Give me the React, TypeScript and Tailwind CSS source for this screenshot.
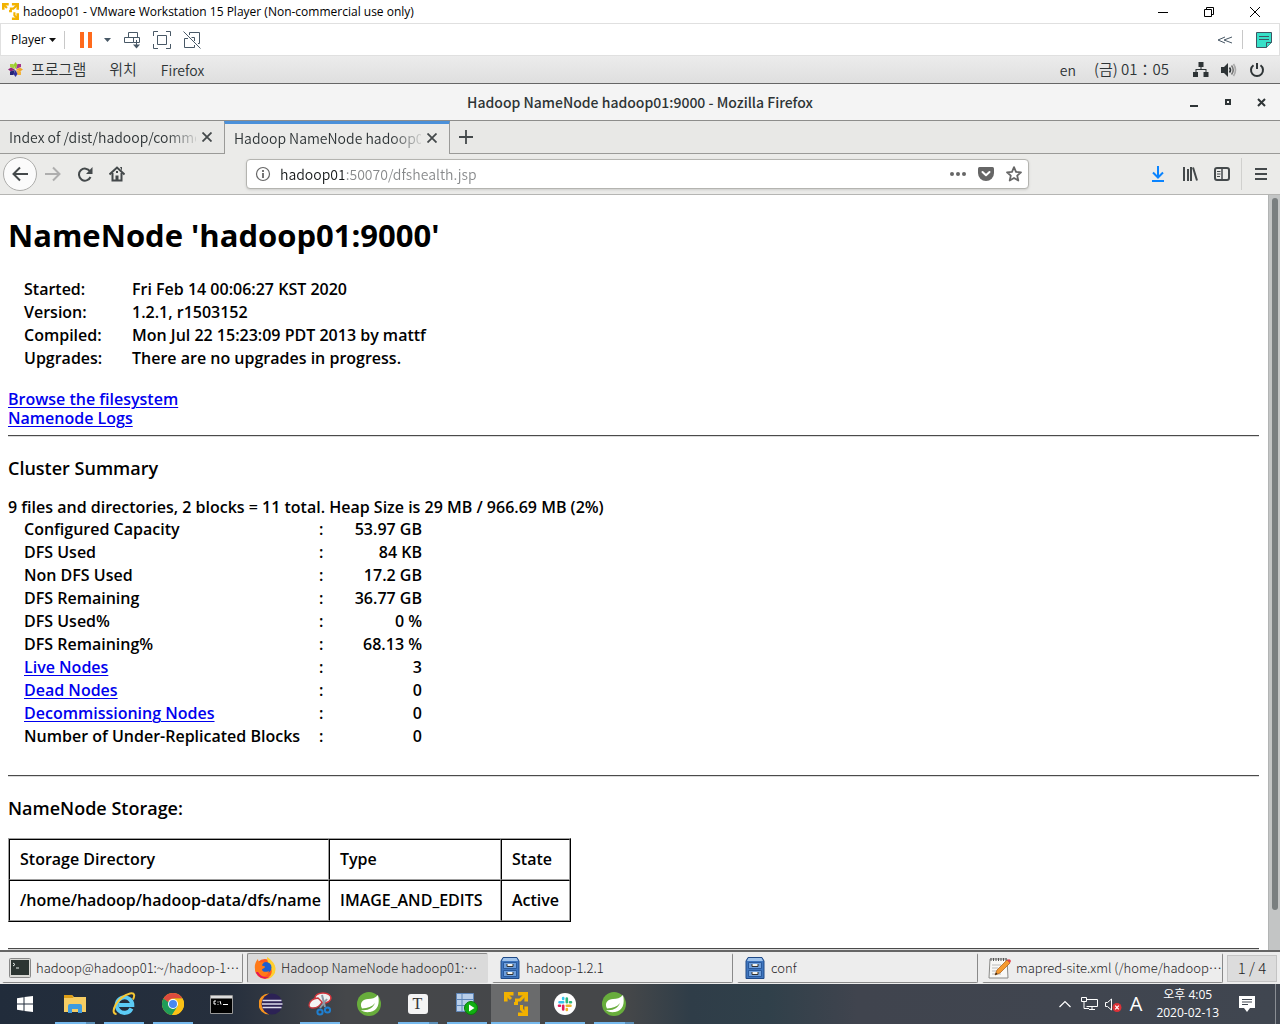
import React from "react";

type Row = { label: string; value: string; link?: boolean };

const startup: Row[] = [
  { label: "Started:", value: "Fri Feb 14 00:06:27 KST 2020" },
  { label: "Version:", value: "1.2.1, r1503152" },
  { label: "Compiled:", value: "Mon Jul 22 15:23:09 PDT 2013 by mattf" },
  { label: "Upgrades:", value: "There are no upgrades in progress." },
];

const summary: Row[] = [
  { label: "Configured Capacity", value: "53.97 GB" },
  { label: "DFS Used", value: "84 KB" },
  { label: "Non DFS Used", value: "17.2 GB" },
  { label: "DFS Remaining", value: "36.77 GB" },
  { label: "DFS Used%", value: "0 %" },
  { label: "DFS Remaining%", value: "68.13 %" },
  { label: "Live Nodes", value: "3", link: true },
  { label: "Dead Nodes", value: "0", link: true },
  { label: "Decommissioning Nodes", value: "0", link: true },
  { label: "Number of Under-Replicated Blocks", value: "0" },
];

function VmLogo({ size }: { size: number }) {
  return (
    <svg width={size} height={size} viewBox="0 0 24 24" fill="none" stroke="#f2b200" strokeWidth="3.600" aria-hidden="true">
      <path d="M1.800 9.500V1.800H9.500M14 1.800H22.200V9.500M22.200 14.500V22.200H14" />
      <path d="M2 2L7 7M22 2L16 8H12.500V11.500H10M22 22L17.500 17.500V13" strokeWidth="3" />
    </svg>
  );
}

function Caret({ color }: { color: string }) {
  return (
    <svg width="7" height="4" viewBox="0 0 7 4" aria-hidden="true">
      <path d="M0 0h7L3.5 4z" fill={color} />
    </svg>
  );
}

function HostTitleBar() {
  return (
    <header className="flex h-[23px] shrink-0 items-center bg-white pl-0.5 pr-px font-['Open_Sans','Noto_Sans_CJK_KR',sans-serif] text-xs text-black">
      <VmLogo size={17} />
      <h1 className="ml-1 flex-1">hadoop01 - VMware Workstation 15 Player (Non-commercial use only)</h1>
      <button aria-label="Minimize window" className="flex w-[46px] justify-center">
        <svg width="10" height="10" viewBox="0 0 10 10"><path d="M0 5.5h10" stroke="#000" /></svg>
      </button>
      <button aria-label="Restore window" className="flex w-[45px] justify-center">
        <svg width="10" height="10" viewBox="0 0 10 10" fill="none" stroke="#000"><path d="M.5 2.5h7v7h-7zM2.500 2.500v-2h7v7h-2" /></svg>
      </button>
      <button aria-label="Close window" className="flex w-12 justify-center">
        <svg width="10" height="10" viewBox="0 0 10 10" stroke="#000"><path d="M0 0l10 10M10 0L0 10" /></svg>
      </button>
    </header>
  );
}

function PlayerToolbar() {
  return (
    <div className="flex h-[33px] shrink-0 items-center border border-[#e0e0e0] bg-white pl-[10px] font-['Open_Sans',sans-serif] text-xs text-black">
      <button className="flex items-center gap-[3px]">
        Player <Caret color="#111" />
      </button>
      <span className="ml-2 h-[18px] w-px bg-[#c8c8c8]" />
      <button aria-label="Suspend" className="ml-[15px] flex gap-1">
        <span className="h-4 w-1 bg-[#ff6a1c]" />
        <span className="h-4 w-1 bg-[#ff6a1c]" />
      </button>
      <button aria-label="Power options" className="ml-3 flex"><Caret color="#485866" /></button>
      <button aria-label="Send Ctrl+Alt+Del" className="ml-[13px]">
        <svg width="17" height="18" viewBox="0 0 17 18" fill="none" stroke="#485866">
          <path d="M4.500 6.500v-5h9v5M.5 6.500h15v5h-6M.5 6.500v5h9v-5M12.500 9v6" />
          <path d="M9 13.500h7l-3.500 4z" fill="#485866" stroke="none" />
        </svg>
      </button>
      <button aria-label="Full screen" className="ml-3">
        <svg width="18" height="18" viewBox="0 0 18 18" fill="none" stroke="#485866">
          <path d="M.5 5V.5H5M13 .5h4.500V5M17.500 13v4.500H13M5 17.500H.5V13M4.500 4.500h9v9h-9z" />
        </svg>
      </button>
      <button aria-label="Unity mode" className="ml-3">
        <svg width="18" height="18" viewBox="0 0 18 18" fill="none" stroke="#485866">
          <path d="M6.500 4V1.500h10v11H15M1.500 7.500v9h10v-2.500M1.500 7.500H5M11.500 10V6.500H8.500M.5.5l17 17" />
        </svg>
      </button>
      <span className="flex-1" />
      <button aria-label="Collapse toolbar" className="mr-[9px]">
        <svg width="16" height="10" viewBox="0 0 16 10" fill="none" stroke="#485866"><path d="M8 2L1 5L8 8M15 2L7 5L15 8" /></svg>
      </button>
      <span className="h-[19px] w-px bg-[#c8c8c8]" />
      <button aria-label="Notes" className="ml-[13px] mr-[7px]">
        <svg width="16" height="16" viewBox="0 0 16 16" fill="#36e0c8" stroke="#3d5663">
          <path d="M.5.500h15v10l-5 5H.5z" />
          <path d="M15.500 10.500h-5v5M3 4.500h10M3 7.500h10" />
        </svg>
      </button>
    </div>
  );
}

function GnomeTopBar() {
  return (
    <nav className="flex h-7 shrink-0 items-center border-b border-[#666] bg-linear-to-b from-[#ececec] to-[#dfdfdf] pl-2 pr-[15px] text-[15px] font-[350] text-[#2e3436]">
      <svg width="15" height="15" viewBox="0 0 15 15" aria-hidden="true">
        <path d="M7.500 0l2 3-2 4-2-4z" fill="#9ccd2a" />
        <path d="M2 2h3.500l1.500 5L2 5z" fill="#a6d13c" />
        <path d="M9.500 2H13v3L8 7z" fill="#a3358c" />
        <path d="M0 7.500l3-2 4 2-4 2z" fill="#932279" />
        <path d="M15 7.500l-3-2-4 2 4 2z" fill="#f0a62b" />
        <path d="M2 13V9.500L7 8l-1.500 5z" fill="#262577" />
        <path d="M13 13V9.500L8 8l1.500 5z" fill="#f2b33d" />
        <path d="M7.500 15l2-3-2-4-2 4z" fill="#33309b" />
      </svg>
      <button className="ml-2">프로그램</button>
      <button className="ml-[23px]">위치</button>
      <button className="ml-6 text-sm">Firefox</button>
      <span className="flex-1" />
      <button className="text-sm">en</button>
      <time className="ml-[18px]">(금) 01：05</time>
      <svg className="ml-6" width="16" height="15" viewBox="0 0 16 15" fill="#2e3436" aria-label="Network">
        <path d="M5.500 0h5v5H8.500v2h5v3H15.500v5h-5v-5h2V8h-9v2H5v5H0v-5h2.500V7h5V5h-2z" />
      </svg>
      <svg className="ml-3" width="16" height="14" viewBox="0 0 16 14" fill="none" aria-label="Volume">
        <path d="M0 4h3l4-4v14l-4-4H0z" fill="#2e3436" />
        <path d="M8.500 4.500q2 2.500 0 5" stroke="#2e3436" strokeWidth="1.600" />
        <path d="M10.500 2.500q3.500 4.500 0 9" stroke="#777" strokeWidth="1.600" />
        <path d="M12.500 1q4 6 0 12" stroke="#aaa" strokeWidth="1.600" />
      </svg>
      <svg className="ml-3" width="16" height="16" viewBox="0 0 16 16" fill="none" stroke="#2e3436" strokeWidth="2" aria-label="Power">
        <path d="M4.500 3.200a6 6 0 1 0 7 0M8 1v6" />
      </svg>
    </nav>
  );
}

function WindowTitle() {
  return (
    <div className="grid h-[37px] shrink-0 grid-cols-[1fr_auto_1fr] items-center border-b border-[#8d8d8b] bg-[#f4f4f4]">
      <span />
      <h2 className="text-sm font-medium text-[#2e3436]">Hadoop NameNode hadoop01:9000 - Mozilla Firefox</h2>
      <div className="flex items-center justify-end gap-[25px] pr-3.5">
        <button aria-label="Minimize">
          <svg width="9" height="9" viewBox="0 0 9 9"><path d="M0 7h8v2H0z" fill="#2e3436" /></svg>
        </button>
        <button aria-label="Maximize">
          <svg width="8" height="8" viewBox="0 0 8 8"><path d="M2 2h4v4H2z" fill="none" stroke="#2e3436" strokeWidth="2" /></svg>
        </button>
        <button aria-label="Close">
          <svg width="9" height="9" viewBox="0 0 9 9"><path d="M1 1l7 7M8 1L1 8" stroke="#2e3436" strokeWidth="2" /></svg>
        </button>
      </div>
    </div>
  );
}

function Tab({ title, active }: { title: string; active?: boolean }) {
  return (
    <div
      className={
        active
          ? "flex w-[226px] items-center border-x border-t-[3px] border-x-[#9a9a98] border-t-[#4a90d9] bg-[#ebebe9] pb-[3px] pl-[9px] pr-3"
          : "flex w-[224px] items-center border-b border-[#9a9a98] pl-[9px] pr-3"
      }
    >
      <button className="min-w-0 flex-1 overflow-hidden whitespace-nowrap text-left [mask-image:linear-gradient(90deg,#000_84%,#0002)]">
        {title}
      </button>
      <button aria-label="Close tab" className="ml-1.5">
        <svg width="10" height="10" viewBox="0 0 10 10"><path d="M.5.5l9 9M9.500.5l-9 9" stroke="#44494b" strokeWidth="1.800" /></svg>
      </button>
    </div>
  );
}

function TabStrip() {
  return (
    <div className="flex h-[33px] shrink-0 bg-[#e8e8e6] text-sm font-[350] text-[#2e3436]">
      <Tab title="Index of /dist/hadoop/commo" />
      <Tab title="Hadoop NameNode hadoop0" active />
      <div className="flex flex-1 items-center border-b border-[#9a9a98] pl-[9px]">
        <button aria-label="New tab">
          <svg width="14" height="14" viewBox="0 0 14 14"><path d="M7 0v14M0 7h14" stroke="#44494b" strokeWidth="1.800" /></svg>
        </button>
      </div>
    </div>
  );
}

function ToolButton({ label, children }: { label: string; children: React.ReactNode }) {
  return (
    <button aria-label={label} className="flex h-8 w-8 shrink-0 items-center justify-center">
      <svg width="16" height="16" viewBox="0 0 16 16" fill="none" stroke="#44494b" strokeWidth="2">
        {children}
      </svg>
    </button>
  );
}

function NavBar() {
  return (
    <div className="flex h-[41px] shrink-0 items-center border-b border-[#b5b5b3] bg-[#ebebe9] pl-[3px] pr-[3px]">
      <button aria-label="Back" className="flex h-[34px] w-[34px] shrink-0 items-center justify-center rounded-full border border-[#acacaa] bg-[#fbfbfb]">
        <svg width="16" height="16" viewBox="0 0 16 16" fill="none" stroke="#44494b" strokeWidth="2"><path d="M16 8H1.500M8 1.500L1.500 8L8 14.500" /></svg>
      </button>
      <ToolButton label="Forward"><path d="M0 8h14.500M8 1.500L14.500 8L8 14.500" stroke="#aeaeae" /></ToolButton>
      <ToolButton label="Reload">
        <path d="M13 5.300A6 6 0 1 0 13.500 11" />
        <path d="M15.500 1v7H9z" fill="#44494b" stroke="none" />
      </ToolButton>
      <ToolButton label="Home">
        <path d="M.5 8.500L8 1.500l7.500 7" />
        <path d="M3.500 7v7.500h9V7" />
        <path d="M6.500 15V9.500h3V15zM11 1h2v4z" fill="#44494b" stroke="none" />
        <path d="M8 5v2" />
      </ToolButton>
      <div className="mx-[113px] flex h-[30px] min-w-0 flex-1 items-center rounded-[4px] border border-[#b4b4b0] bg-white pl-2 pr-1.5 shadow-sm">
        <svg width="16" height="16" viewBox="0 0 16 16" fill="none" stroke="#666" aria-hidden="true">
          <circle cx="8" cy="8" r="6.500" strokeWidth="1.200" />
          <path d="M8 7v5M8 4v2" strokeWidth="1.800" />
        </svg>
        <input
          aria-label="Address"
          defaultValue="hadoop01:50070/dfshealth.jsp"
          className="ml-[9px] min-w-0 flex-1 bg-[linear-gradient(90deg,#16191a_64px,#858789_64px)] bg-clip-text text-sm font-[350] text-transparent outline-none"
        />
        <button aria-label="Page actions" className="mr-3">
          <svg width="16" height="4" viewBox="0 0 16 4" fill="#666"><circle cx="2" cy="2" r="2" /><circle cx="8" cy="2" r="2" /><circle cx="14" cy="2" r="2" /></svg>
        </button>
        <button aria-label="Save to Pocket" className="mr-3">
          <svg width="16" height="14" viewBox="0 0 16 14">
            <path d="M1.500 0h13Q16 0 16 1.500V6A8 8 0 0 1 0 6V1.500Q0 0 1.500 0z" fill="#666" />
            <path d="M4.500 5L8 8.300L11.500 5" fill="none" stroke="#fff" strokeWidth="2" strokeLinecap="round" strokeLinejoin="round" />
          </svg>
        </button>
        <button aria-label="Bookmark">
          <svg width="16" height="16" viewBox="0 0 16 16" fill="none" stroke="#666" strokeWidth="1.800" strokeLinejoin="round">
            <path d="M8 1.200l2 4.600 5 .5-3.800 3.300 1.100 4.900L8 12l-4.300 2.500 1.100-4.900L1 6.300l5-.5z" />
          </svg>
        </button>
      </div>
      <ToolButton label="Downloads"><path d="M8 0v11M3 6.500l5 5 5-5M2 15h12" stroke="#0a84ff" /></ToolButton>
      <ToolButton label="Library"><path d="M2 1v14M6 3v12M9 1v14M11 1.500l4 13" strokeWidth="2" /></ToolButton>
      <ToolButton label="Sidebars">
        <rect x="1" y="2" width="14" height="12" rx="2" />
        <path d="M8 2v12" strokeWidth="1.500" />
        <path d="M3 5.500h3.500M3 8h3.500M3 10.500h3" strokeWidth="1" />
      </ToolButton>
      <span className="ml-[3px] mr-[3px] h-8 w-px bg-[#d0d0ce]" />
      <ToolButton label="Menu"><path d="M2 3h12M2 8h12M2 13h12" /></ToolButton>
    </div>
  );
}

function Rule() {
  return <hr className="mr-[9px] h-0.5 border-t border-b border-t-[#4a4a4a] border-b-[#dcdcdc]" />;
}

function Link({ children }: { children: React.ReactNode }) {
  return (
    <a href="#" className="block w-fit text-[#0000ee] underline decoration-1 underline-offset-2">
      {children}
    </a>
  );
}

function Page() {
  const head = "border border-t-black border-l-black border-r-[#a0a0a0] border-b-[#a0a0a0] py-[10px] pr-[7px] pl-[10px] text-left font-semibold whitespace-nowrap";
  return (
    <main className="min-w-0 flex-1 overflow-hidden bg-white pl-2 pt-[21px] font-['Open_Sans',sans-serif] text-base leading-[19px] font-semibold text-black">
      <h1 className="text-[31px] leading-[38px] font-bold">NameNode 'hadoop01:9000'</h1>
      <table className="mt-6 ml-4">
        <tbody>
          {startup.map((r) => (
            <tr key={r.label} className="h-[23px]">
              <td className="w-[108px]">{r.label}</td>
              <td>{r.value}</td>
            </tr>
          ))}
        </tbody>
      </table>
      <div className="mt-5 mb-[7px]">
        <Link>Browse the filesystem</Link>
        <Link>Namenode Logs</Link>
      </div>
      <Rule />
      <h3 className="mt-5 text-lg leading-[22px]">Cluster Summary</h3>
      <p className="mt-[19px] mb-px">9 files and directories, 2 blocks = 11 total. Heap Size is 29 MB / 966.69 MB (2%)</p>
      <table className="ml-4">
        <tbody>
          {summary.map((r) => (
            <tr key={r.label} className="h-[23px]">
              <td className="w-[295px]">{r.link ? <Link>{r.label}</Link> : r.label}</td>
              <td className="w-[22px]">:</td>
              <td className="w-[81px] text-right">{r.value}</td>
            </tr>
          ))}
        </tbody>
      </table>
      <div className="mt-[27px]"><Rule /></div>
      <h3 className="mt-5 text-lg leading-[22px]">NameNode Storage:</h3>
      <table className="mt-[19px] border-separate border-spacing-0 border border-t-[#a0a0a0] border-l-[#a0a0a0] border-r-black border-b-black">
        <thead>
          <tr>
            <th className={head + " w-[320px]"}>Storage Directory</th>
            <th className={head + " w-[172px]"}>Type</th>
            <th className={head + " w-[69px]"}>State</th>
          </tr>
        </thead>
        <tbody>
          <tr>
            <td className={head}>/home/hadoop/hadoop-data/dfs/name</td>
            <td className={head}>IMAGE_AND_EDITS</td>
            <td className={head}>Active</td>
          </tr>
        </tbody>
      </table>
      <div className="mt-[26px]"><Rule /></div>
    </main>
  );
}

function FirefoxLogo() {
  return (
    <svg width="22" height="22" viewBox="0 0 22 22" aria-hidden="true">
      <circle cx="11" cy="12" r="10" fill="#ff5a1f" />
      <path d="M13 0c3 2 8 6 8.500 11a10 10 0 0 1-10 11C17 20 19 16 17 11c-1-3-4-5-4-11z" fill="#ffcf2e" />
      <circle cx="12" cy="10.500" r="5.500" fill="#1c5fd0" />
      <path d="M1 12C0 7 3 3 4 2c0 2 1 3 2 3.500 1-.5 3-.5 4 0-1 1-2 2-2 3l3 1c0 2-3 2-3 3.500 1 2 4 2.500 7 1-1 4-4 6-8 5.500C4 19 1.500 16 1 12z" fill="#ff7a18" />
      <path d="M2 15c2 6 9 8 14 5-4 1-9 0-12-5z" fill="#e4165c" />
    </svg>
  );
}

function TerminalLogo() {
  return (
    <svg width="22" height="20" viewBox="0 0 22 20" aria-hidden="true">
      <rect x=".5" y=".5" width="21" height="19" rx="1" fill="#d8d8d4" stroke="#888" />
      <rect x="2" y="2" width="18" height="15" fill="#2c3532" />
      <path d="M4 5l2 1.500L4 8M7 10h3" stroke="#e8eeea" fill="none" />
    </svg>
  );
}

function CabinetLogo() {
  return (
    <svg width="22" height="22" viewBox="0 0 22 22" aria-hidden="true">
      <path d="M4 .5h14l2 3.500v17.500H2V4z" fill="#3f76bf" stroke="#204a87" />
      <path d="M4.500 1h13l1.500 3H3z" fill="#9fc3ec" />
      <path d="M4.500 5.500h13v6h-13zM4.500 13.500h13v6h-13z" fill="#6f9fdb" stroke="#2a5a9d" />
      <path d="M8 7v2.500h6V7M8 15v2.500h6V15" fill="#f4f4ee" stroke="#333" />
    </svg>
  );
}

function EditorLogo() {
  return (
    <svg width="24" height="22" viewBox="0 0 24 22" aria-hidden="true">
      <path d="M2 2h17l1 19H1z" fill="#f8f8f6" stroke="#8a8a88" />
      <path d="M3 1v3M5.500 1v3M8 1v3M10.500 1v3M13 1v3M15.500 1v3M18 1v3" stroke="#555" />
      <path d="M4 8h9M4 11h6M4 14h5M4 17h9" stroke="#bbb" />
      <path d="M7 18l2-5L19 3l3 3-10 10z" fill="#f59a2f" stroke="#a85a12" strokeWidth=".7" />
      <path d="M19 3q3-2 4 1l-1 2z" fill="#e0434b" />
      <path d="M7 18l1-2.500 1.500 1.500z" fill="#222" />
    </svg>
  );
}

const tasks = [
  { icon: <TerminalLogo />, title: "hadoop@hadoop01:~/hadoop-1…" },
  { icon: <FirefoxLogo />, title: "Hadoop NameNode hadoop01:…", active: true },
  { icon: <CabinetLogo />, title: "hadoop-1.2.1" },
  { icon: <CabinetLogo />, title: "conf" },
  { icon: <EditorLogo />, title: "mapred-site.xml (/home/hadoop…" },
];

function GnomeTaskBar() {
  return (
    <nav className="flex h-[34px] shrink-0 items-center gap-1 border-t-2 border-[#666] bg-[#ededed] px-0.5 font-['Noto_Sans_CJK_JP',sans-serif] text-[13px] text-[#1f2426]">
      {tasks.map((t) => (
        <button
          key={t.title}
          lang="ja"
          className={
            t.active
              ? "flex h-[30px] min-w-0 flex-1 items-center gap-1 whitespace-nowrap rounded-[2px] border border-t-[#8a8a8a] border-r-[#dadada] border-b-[#dadada] border-l-[#8a8a8a] bg-[#dadada] pl-[5px] font-light"
              : "flex h-[30px] min-w-0 flex-1 items-center gap-1 whitespace-nowrap rounded-[2px] border border-t-[#ededed] border-r-[#8a8a8a] border-b-[#8a8a8a] border-l-[#ededed] bg-[#ededed] pl-[5px] font-light"
          }
        >
          <span className="flex w-6 shrink-0 justify-center">{t.icon}</span>
          {t.title}
        </button>
      ))}
      <button className="mr-px h-[27px] w-[50px] shrink-0 border border-[#c4c4c4] bg-[#dcdcdc] text-[15px] font-light">1 / 4</button>
    </nav>
  );
}

function SpringLogo() {
  return (
    <svg width="24" height="24" viewBox="0 0 24 24">
      <circle cx="12" cy="12" r="12" fill="#68ad3c" />
      <path d="M21 3c2 8 0 16-8 17-4 .5-8-.5-9-2 7 1 12-2 14-7-3 4-7 5-13 5.500C2 11 6 7 11 7c4 0 7-1 10-4z" fill="#fff" />
    </svg>
  );
}

const apps: { name: string; icon: React.ReactNode; open?: boolean; stacked?: boolean; active?: boolean }[] = [
  {
    name: "File Explorer",
    open: true,
    stacked: true,
    icon: (
      <svg width="22" height="20" viewBox="0 0 22 20">
        <path d="M0 1h8l2 2h12v15H0z" fill="#f6cd63" />
        <path d="M0 1h8l1.500 3H0z" fill="#dd9d16" />
        <path d="M4 19v-7q0-2 2-2h10q2 0 2 2v7h-4v-4H8v4z" fill="#3d9be0" />
      </svg>
    ),
  },
  {
    name: "Internet Explorer",
    open: true,
    icon: (
      <svg width="24" height="24" viewBox="0 0 24 24" fill="none">
        <path d="M19.500 16.500A7.800 7.800 0 1 1 20.300 13H7" stroke="#5bcbf5" strokeWidth="4" />
        <path d="M4.500 22C-3 22 5 5 18 1.500c5.500-1 4.500 3 3 6" stroke="#f7c733" strokeWidth="2" />
      </svg>
    ),
  },
  {
    name: "Chrome",
    open: true,
    icon: (
      <svg width="22" height="22" viewBox="0 0 22 22">
        <circle cx="11" cy="11" r="11" fill="#fbc116" />
        <path d="M20.530 5.500H11v5.500L1.470 5.500A11 11 0 0 0 10 22l5.500-8.500z" fill="#1f9d58" />
        <path d="M20.530 5.500H11A5.500 5.500 0 0 0 6 9L1.470 5.500A11 11 0 0 1 20.530 5.500z" fill="#dd4b3e" />
        <path d="M20.530 5.500H11l5 7.500L10 22A11 11 0 0 0 20.530 5.500z" fill="#fbc116" />
        <circle cx="11" cy="11" r="5" fill="#fff" />
        <circle cx="11" cy="11" r="4" fill="#4688f1" />
      </svg>
    ),
  },
  {
    name: "Command Prompt",
    icon: (
      <svg width="23" height="19" viewBox="0 0 23 19">
        <path d="M.5.5h22v18H.5z" fill="#000" stroke="#999" />
        <path d="M1 1h21v2.500H1z" fill="#ddd" />
        <path d="M6 6H4v3h2M8 6.500v1M8 9v.8M10 6l1 3.500M13 9.500h5" stroke="#fff" fill="none" />
      </svg>
    ),
  },
  {
    name: "Eclipse",
    icon: (
      <svg width="24" height="22" viewBox="0 0 24 22">
        <path d="M10 .5A10.500 10.500 0 0 0 10 21.500A14 14 0 0 1 10 .5z" fill="#f7941e" />
        <circle cx="13" cy="11" r="10.500" fill="#2c2255" />
        <path d="M3.500 7.500h19M3 11h20.500M3.500 14.500h19" stroke="#dcdcec" strokeWidth="1.600" />
      </svg>
    ),
  },
  {
    name: "Snipping Tool",
    open: true,
    icon: (
      <svg width="24" height="24" viewBox="0 0 24 24" fill="none">
        <ellipse cx="15" cy="6" rx="8" ry="5" fill="#eee" stroke="#d6343b" strokeWidth="1.500" />
        <path d="M1 13q1-6 9-7l4 4q-3 6-9 6-4 0-4-3z" fill="#f4f4f4" stroke="#c8373d" strokeWidth="1.300" />
        <path d="M14 3l3 12M19 7l-7 9" stroke="#8d99a5" strokeWidth="2" />
        <circle cx="12" cy="20" r="2.600" stroke="#1f7fd0" strokeWidth="2" />
        <circle cx="19.500" cy="18" r="2.600" stroke="#1f7fd0" strokeWidth="2" />
      </svg>
    ),
  },
  { name: "Spring Tool Suite", icon: <SpringLogo /> },
  {
    name: "Typora",
    open: true,
    stacked: true,
    icon: (
      <span className="flex h-5 w-5 items-center justify-center rounded-[3px] bg-[#f4f4f4] font-['Liberation_Serif',serif] text-base text-[#333]">T</span>
    ),
  },
  {
    name: "Database Tool",
    open: true,
    icon: (
      <svg width="22" height="22" viewBox="0 0 22 22">
        <path d="M.5.5h17v18H.5z" fill="#b9cfea" stroke="#5e86b8" />
        <path d="M1 6.500h16M1 12.500h16M6 1v17" stroke="#5e86b8" />
        <circle cx="15" cy="15" r="6.500" fill="#11b011" stroke="#0a7a0a" />
        <path d="M13 11.500v7l5.500-3.500z" fill="#fff" />
      </svg>
    ),
  },
  { name: "VMware Player", open: true, active: true, icon: <VmLogo size={24} /> },
  {
    name: "Slack",
    open: true,
    icon: (
      <svg width="22" height="22" viewBox="0 0 22 22" strokeWidth="2.600" strokeLinecap="round">
        <circle cx="11" cy="11" r="11" fill="#fff" />
        <path d="M9.200 5v1M5.500 9.200h3.700" stroke="#36c5f0" />
        <path d="M12.800 5.500v3.700M17 9.200h-1" stroke="#2eb67d" />
        <path d="M12.800 12.800h3.700M12.800 17v-1" stroke="#ecb22e" />
        <path d="M9.200 12.800v3.700M5 12.800h1" stroke="#e01e5a" />
      </svg>
    ),
  },
  { name: "Spring Boot", open: true, stacked: true, icon: <SpringLogo /> },
];

function WindowsTaskBar() {
  return (
    <footer className="flex h-10 shrink-0 bg-[linear-gradient(90deg,#212c3b_0%,#262f3d_18%,#45474a_27%,#454749_49%,#2f3d48_54%,#30404a_60%,#40444e_67%,#404650_100%)] text-xs text-white">
      <button aria-label="Start" className="flex w-[50px] items-center justify-center">
        <svg width="16" height="16" viewBox="0 0 16 16" fill="#fff">
          <path d="M0 2.300L6.500 1.300v6.200H0zM7.500 1.100L16 0v7.500H7.500zM0 8.500h6.500v6.200L0 13.700zM7.500 8.500H16V16l-8.500-1.100z" />
        </svg>
      </button>
      {apps.map((a) => (
        <button
          key={a.name}
          aria-label={a.name}
          className={a.active ? "flex w-[49px] flex-col items-center bg-[#6a6b6c]" : "flex w-[49px] flex-col items-center"}
        >
          <span className="flex flex-1 items-center pt-0.5">{a.icon}</span>
          <span
            className={
              a.active
                ? "h-0.5 w-full bg-[#76b9ed]"
                : a.stacked
                  ? "h-0.5 w-10 border-r-[9px] border-[#5b8fb8] bg-[#76b9ed]"
                  : a.open
                    ? "h-0.5 w-10 bg-[#76b9ed]"
                    : "h-0.5"
            }
          />
        </button>
      ))}
      <span className="flex-1" />
      <button aria-label="Show hidden icons">
        <svg width="12" height="8" viewBox="0 0 12 8" fill="none" stroke="#fff" strokeWidth="1.200"><path d="M.5 7L6 1.500L11.500 7" /></svg>
      </button>
      <button aria-label="Network" className="ml-[10px]">
        <svg width="17" height="14" viewBox="0 0 17 14" fill="none" stroke="#fff">
          <path d="M5.500 2.500h11v7h-11M8 12.500h6M11 9.500v3M.5.500h5v4h-5zM3 4.500v7h5" />
        </svg>
      </button>
      <button aria-label="Volume muted" className="ml-[7px]">
        <svg width="17" height="15" viewBox="0 0 17 15" fill="none" stroke="#fff">
          <path d="M.5 5.500h2L6.500 2v11L2.500 9.500h-2z" />
          <circle cx="12" cy="10.500" r="4.500" fill="#dc3238" stroke="none" />
          <path d="M10.200 8.700l3.600 3.600M13.800 8.700l-3.600 3.600" strokeWidth="1.200" />
        </svg>
      </button>
      <button aria-label="Input mode" className="ml-2 font-['Open_Sans',sans-serif] text-xl">A</button>
      <time className="ml-3.5 flex flex-col justify-center text-center font-['Open_Sans','Noto_Sans_CJK_KR',sans-serif] leading-[18px]">
        <span>오후 4:05</span>
        <span>2020-02-13</span>
      </time>
      <button aria-label="Notifications" className="ml-5 mr-5">
        <svg width="16" height="16" viewBox="0 0 16 16">
          <path d="M0 0h16v12h-5l-3 4-3-4H0z" fill="#fff" />
          <path d="M3 3.500h10M3 6h10M3 8.500h6" stroke="#404650" />
        </svg>
      </button>
      <span className="w-[5px] border-l border-[#8a8e94]" />
    </footer>
  );
}

export default function App() {
  return (
    <div className="flex h-screen flex-col overflow-hidden bg-white font-['Noto_Sans_CJK_KR',sans-serif]">
      <HostTitleBar />
      <PlayerToolbar />
      <GnomeTopBar />
      <WindowTitle />
      <TabStrip />
      <NavBar />
      <div className="flex min-h-0 flex-1">
        <Page />
        <div className="flex w-3 shrink-0 flex-col items-center border-l border-[#b2b4b4] bg-[#c3c5c5] pt-[3px] pb-10">
          <div className="w-1.5 flex-1 rounded-full bg-[#7a7f80]" />
        </div>
      </div>
      <GnomeTaskBar />
      <WindowsTaskBar />
    </div>
  );
}
